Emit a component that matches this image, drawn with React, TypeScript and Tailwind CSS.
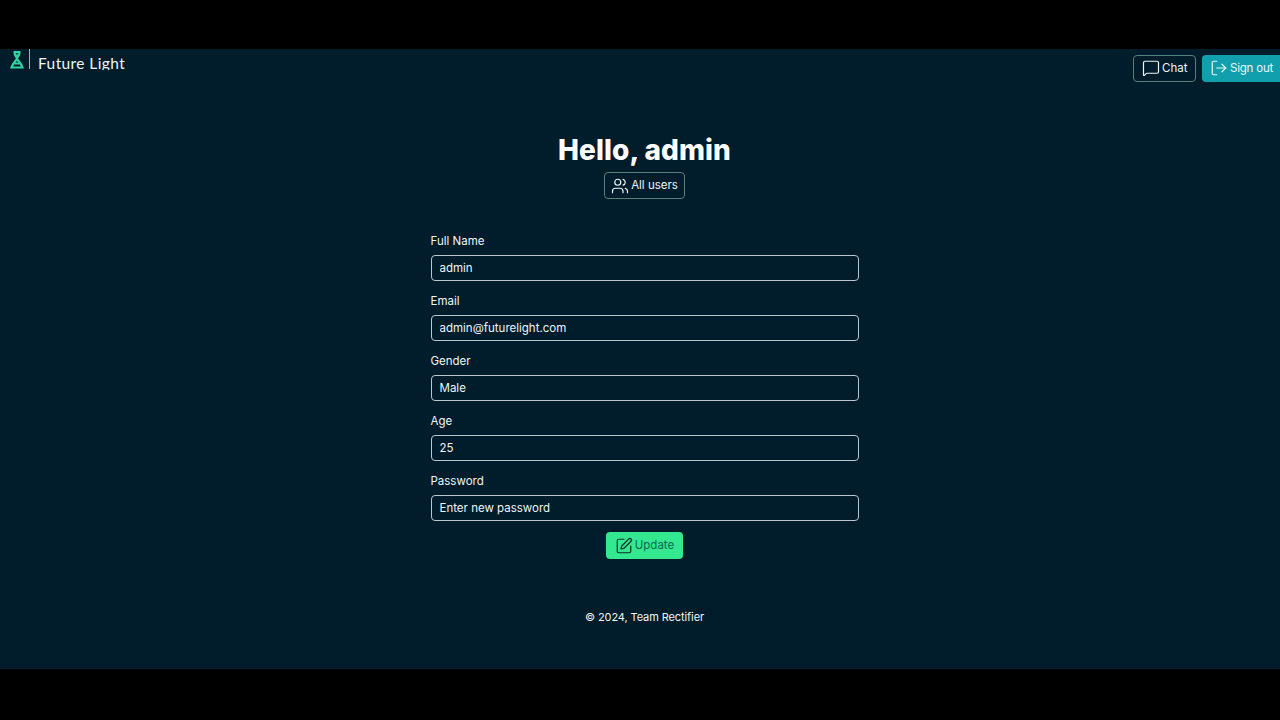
import { MessageSquare, LogOut, Users, SquarePen } from "lucide-react";

const fields = [
  { label: "Full Name", value: "admin" },
  { label: "Email", value: "admin@futurelight.com" },
  { label: "Gender", value: "Male" },
  { label: "Age", value: "25" },
  { label: "Password", value: "Enter new password" },
];

const App = () => {
  return (
    <div className="flex flex-col h-[720px] overflow-hidden bg-black text-white font-['Inter',sans-serif]">
      <div className="h-[49px] shrink-0" />

      <div className="flex flex-col h-[620px] bg-[#011c2a]">
        {/* Nav */}
        <div className="flex justify-between h-[48px]">
          <div className="flex items-start pl-[10px]">
            <svg width="14" height="18" viewBox="0 0 14 18" fill="none" stroke="#2fd6a0" strokeWidth="2.200" className="mt-[2px]">
              <path d="M3.500 1.200h7M4.500 1.200c0 3.500 2 4.500 2.500 6.300C6.500 9.500 2.500 12.500 1.500 16.500h11C11.500 12.500 7.500 9.500 7 7.500c.5-1.800 2.500-2.800 2.500-6.300" />
              <path d="M4.500 12.500h5M5 4.500h4" />
            </svg>
            <div className="w-px h-[20px] bg-[#9fb2bb] ml-[5px]" />
            <div className="h-[17px] overflow-hidden ml-[8px] mt-[4px] text-[15.500px] leading-[20px] tracking-[0.4px] text-[#eef6f8] font-['Lato',sans-serif]">
              Future Light
            </div>
          </div>
          <div className="flex items-start gap-[6px] pt-[6px]">
            <button className="flex items-center gap-[2px] h-[27px] w-[63px] pl-[8px] rounded border border-[#55807c] text-[11.500px] text-[#eef6f8]">
              <MessageSquare size={18} strokeWidth={1.600} className="-mt-[1px]" />
              Chat
            </button>
            <button className="flex items-center gap-[2px] h-[27px] w-[78px] pl-[8px] rounded-l bg-[#119fae] text-[11.500px] tracking-[-0.2px] text-[#e6f7f8]">
              <LogOut size={18} strokeWidth={1.600} className="-mt-[1px]" />
              Sign out
            </button>
          </div>
        </div>

        {/* Main */}
        <div className="flex flex-col items-center pl-[9px]">
          <h1 className="mt-[36px] h-[34px] text-[28px] leading-[34px] font-extrabold tracking-[0.1px]">Hello, admin</h1>
          <button className="flex items-center justify-center gap-[2px] mt-[5px] w-[81px] h-[27px] rounded border border-[#55807c] text-[11.500px] text-[#eef6f8]">
            <Users size={18} strokeWidth={1.600} />
            All users
          </button>

          <form className="flex flex-col gap-[8px] w-[428px] mt-[33px]">
            {fields.map((f) => (
              <div key={f.label} className="flex flex-col h-[52px]">
                <label className="h-[18px] text-[11.500px] leading-[18px] text-[#eef6f8]">{f.label}</label>
                <input
                  readOnly
                  value={f.value}
                  className="mt-[5px] h-[26px] px-[8px] rounded border border-[#b9c8ce] bg-transparent text-[11.500px] text-[#eef6f8] outline-none"
                />
              </div>
            ))}
          </form>

          <button className="flex items-center justify-center gap-[2px] mt-[8px] w-[77px] h-[27px] rounded bg-[#33e88f] text-[11.500px] text-[#0b6a55]">
            <SquarePen size={18} strokeWidth={1.600} className="text-[#04302a]" />
            Update
          </button>

          <footer className="mt-[49px] text-[11px] leading-[18px] tracking-[-0.1px] text-[#eef6f8]">© 2024, Team Rectifier</footer>
        </div>
      </div>

      <div className="flex-1" />
    </div>
  );
};

export default App;
